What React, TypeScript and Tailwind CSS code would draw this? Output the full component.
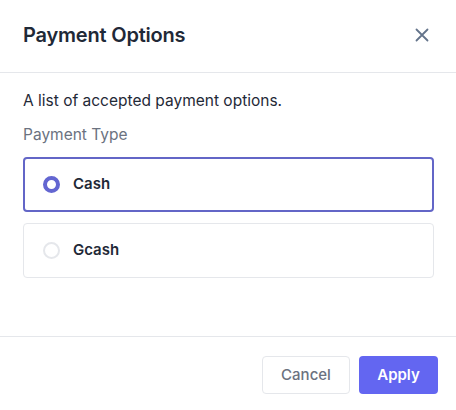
import { useState } from "react";

const options = ["Cash", "Gcash"];

export default function App() {
  const [selected, setSelected] = useState("Cash");

  return (
    <div
      className="w-[456px] h-[410px] bg-white flex flex-col"
      style={{ fontFamily: "Inter, 'Noto Sans', sans-serif" }}
    >
      {/* Header */}
      <div className="h-[73px] flex items-center justify-between pl-[23px] pr-[26px] pb-[2px] border-b border-[#e5e7eb]">
        <h2 className="text-[20px] font-semibold text-[#1f2937] tracking-[-0.2px]">Payment Options</h2>
        <button aria-label="Close" className="text-[#64748b]">
          <svg width="16" height="16" viewBox="0 0 16 16" fill="none" stroke="currentColor" strokeWidth="1.8" strokeLinecap="round">
            <path d="M2.5 2.5l11 11M13.5 2.5l-11 11" />
          </svg>
        </button>
      </div>

      {/* Body */}
      <div className="flex-1 pl-[23px] pr-[22px] pt-[18px]">
        <p className="text-[15.5px] leading-5 text-[#1f2937]">A list of accepted payment options.</p>
        <p className="mt-[14px] text-[15.5px] leading-5 text-[#6b7280]">Payment Type</p>
        <div className="mt-[12px] flex flex-col gap-[11px]">
          {options.map((opt) => {
            const active = opt === selected;
            return (
              <button
                key={opt}
                onClick={() => setSelected(opt)}
                className={
                  active
                    ? "h-[55px] flex items-center gap-[13px] pl-[18px] rounded-[4px] border-2 border-[#6366c7] text-left"
                    : "h-[55px] flex items-center gap-[13px] pl-[19px] rounded-[4px] border border-[#e5e7eb] text-left"
                }
              >
                <span
                  className={
                    active
                      ? "w-[17px] h-[17px] rounded-full border-[4.5px] border-[#6366d1] bg-white"
                      : "w-[17px] h-[17px] rounded-full border-2 border-[#e5e7eb] bg-white"
                  }
                />
                <span className="text-[15px] font-semibold text-[#1f2937]">{opt}</span>
              </button>
            );
          })}
        </div>
      </div>

      {/* Footer */}
      <div className="h-[74px] border-t border-[#e5e7eb] flex items-start justify-end gap-[9px] pt-[19px] pr-[18px]">
        <button className="h-[38px] w-[88px] rounded-[4px] border border-[#e5e7eb] bg-white text-[15px] font-medium text-[#6b7280]">
          Cancel
        </button>
        <button className="h-[38px] w-[79px] rounded-[4px] bg-[#6366f1] text-[15px] font-semibold text-white">
          Apply
        </button>
      </div>
    </div>
  );
}
